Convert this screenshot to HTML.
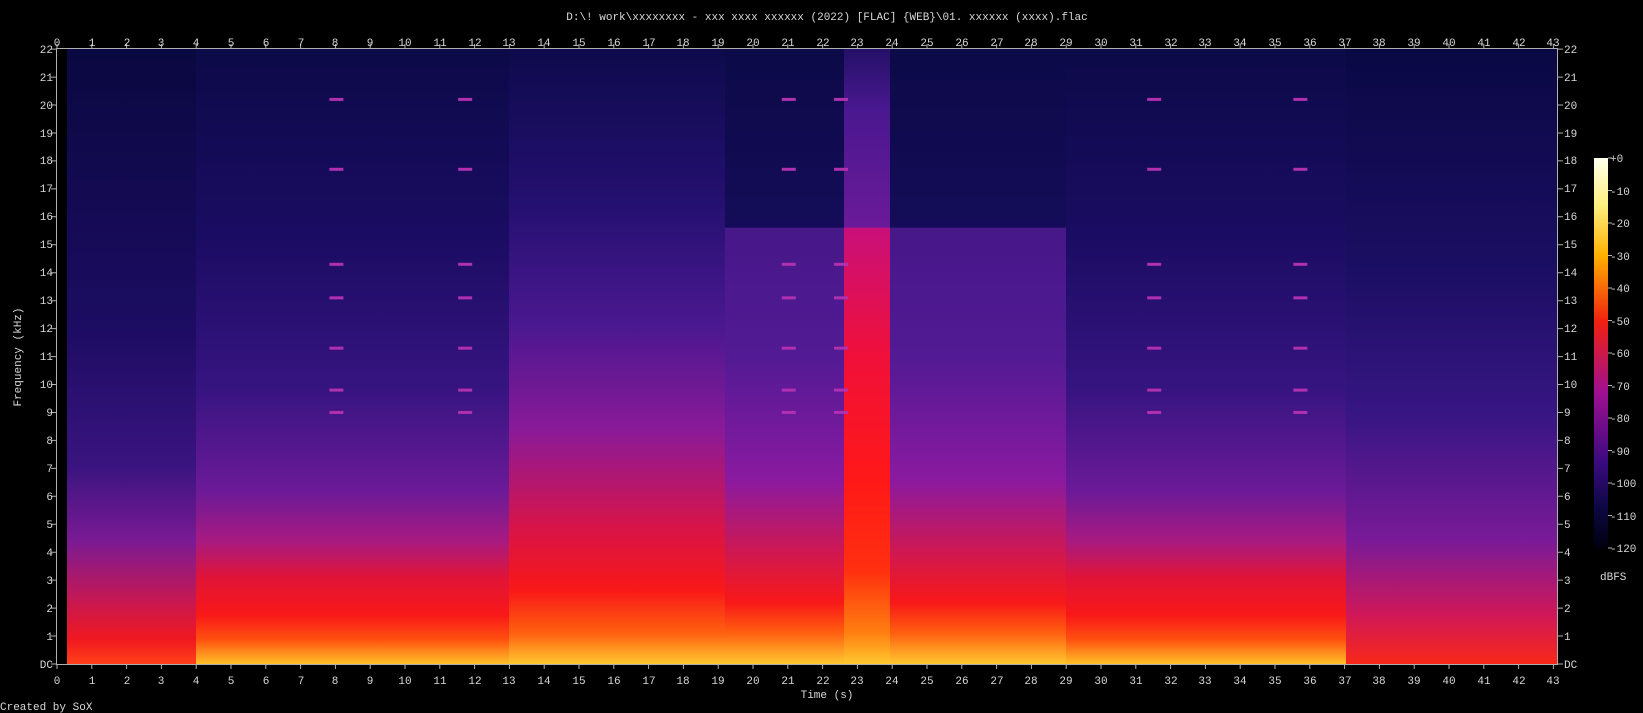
<!DOCTYPE html>
<html><head><meta charset="utf-8"><style>
html,body{margin:0;padding:0;background:#000;width:1643px;height:713px;overflow:hidden}
svg text{font-family:"Liberation Mono",monospace;font-size:11px;fill:#d8d8d8}
</style></head><body>
<svg id="s" width="1643" height="713" viewBox="0 0 1643 713" xmlns="http://www.w3.org/2000/svg">
<defs>
<linearGradient id="gB" x1="0" y1="0" x2="0" y2="1">
<stop offset="0" stop-color="#0a0840"/><stop offset="0.45" stop-color="#1c0c62"/><stop offset="0.68" stop-color="#3a1480"/><stop offset="0.8" stop-color="#7a1a94"/><stop offset="0.9" stop-color="#c81850"/><stop offset="0.96" stop-color="#f01820"/><stop offset="1" stop-color="#ff4018"/></linearGradient>
<linearGradient id="gC" x1="0" y1="0" x2="0" y2="1">
<stop offset="0" stop-color="#0c0a48"/><stop offset="0.3" stop-color="#1a0c62"/><stop offset="0.55" stop-color="#361480"/><stop offset="0.72" stop-color="#6c1a98"/><stop offset="0.8" stop-color="#a81a80"/><stop offset="0.86" stop-color="#e01438"/><stop offset="0.92" stop-color="#f81818"/><stop offset="0.96" stop-color="#ff5010"/><stop offset="1" stop-color="#ffc028"/></linearGradient>
<linearGradient id="gD" x1="0" y1="0" x2="0" y2="1">
<stop offset="0" stop-color="#0e0a4c"/><stop offset="0.25" stop-color="#241070"/><stop offset="0.45" stop-color="#4a1890"/><stop offset="0.62" stop-color="#8a1a98"/><stop offset="0.78" stop-color="#d81448"/><stop offset="0.88" stop-color="#f81818"/><stop offset="0.95" stop-color="#ff6010"/><stop offset="1" stop-color="#ffc830"/></linearGradient>
<linearGradient id="gE" x1="0" y1="0" x2="0" y2="1">
<stop offset="0" stop-color="#0c0a48"/><stop offset="0.29" stop-color="#140c58"/><stop offset="0.291" stop-color="#461888"/><stop offset="0.5" stop-color="#521a94"/><stop offset="0.7" stop-color="#8a1aa0"/><stop offset="0.82" stop-color="#d01850"/><stop offset="0.9" stop-color="#f81818"/><stop offset="0.95" stop-color="#ff6010"/><stop offset="1" stop-color="#ffc830"/></linearGradient>
<linearGradient id="gF" x1="0" y1="0" x2="0" y2="1">
<stop offset="0" stop-color="#241068"/><stop offset="0.1" stop-color="#4a1890"/><stop offset="0.29" stop-color="#6a1a98"/><stop offset="0.291" stop-color="#c8107a"/><stop offset="0.5" stop-color="#f0103a"/><stop offset="0.7" stop-color="#ff1818"/><stop offset="0.85" stop-color="#ff3010"/><stop offset="0.95" stop-color="#ff8010"/><stop offset="1" stop-color="#ffc830"/></linearGradient>
<linearGradient id="gI" x1="0" y1="0" x2="0" y2="1">
<stop offset="0" stop-color="#0a0844"/><stop offset="0.35" stop-color="#1a0e62"/><stop offset="0.6" stop-color="#381684"/><stop offset="0.8" stop-color="#7a1a98"/><stop offset="0.92" stop-color="#d01858"/><stop offset="1" stop-color="#f82818"/></linearGradient>
<linearGradient id="cb" x1="0" y1="0" x2="0" y2="1">
<stop offset="0" stop-color="#ffffee"/><stop offset="0.12" stop-color="#fff080"/><stop offset="0.25" stop-color="#ffb000"/><stop offset="0.42" stop-color="#f02010"/><stop offset="0.6" stop-color="#a01090"/><stop offset="0.78" stop-color="#3a0a80"/><stop offset="0.9" stop-color="#0c0840"/><stop offset="1" stop-color="#000010"/></linearGradient>
</defs>
<rect x="57" y="49" width="1500" height="615" fill="#000"/>
<rect x="67" y="49" width="129" height="615" fill="url(#gB)"/>
<rect x="196" y="49" width="313" height="615" fill="url(#gC)"/>
<rect x="509" y="49" width="216" height="615" fill="url(#gD)"/>
<rect x="725" y="49" width="119" height="615" fill="url(#gE)"/>
<rect x="844" y="49" width="46" height="615" fill="url(#gF)"/>
<rect x="890" y="49" width="176" height="615" fill="url(#gE)"/>
<rect x="1066" y="49" width="280" height="615" fill="url(#gC)"/>
<rect x="1346" y="49" width="211" height="615" fill="url(#gI)"/>
<g id="dash" fill="#b030b0"></g>
<g id="ticks" stroke="#b0b0b0" stroke-width="1" fill="none"></g>
<rect x="56.5" y="48.5" width="1501" height="616" fill="none" stroke="#b0b0b0"/>
<rect x="1594" y="158" width="14" height="390" fill="url(#cb)"/>
<text x="827" y="20" text-anchor="middle">D:\! work\xxxxxxxx - xxx xxxx xxxxxx (2022) [FLAC] {WEB}\01. xxxxxx (xxxx).flac</text>
<g text-anchor="middle">
<text x="57" y="46">0</text><text x="92" y="46">1</text><text x="127" y="46">2</text><text x="161" y="46">3</text><text x="196" y="46">4</text><text x="231" y="46">5</text><text x="266" y="46">6</text><text x="301" y="46">7</text><text x="335" y="46">8</text><text x="370" y="46">9</text><text x="405" y="46">10</text><text x="440" y="46">11</text><text x="475" y="46">12</text><text x="509" y="46">13</text><text x="544" y="46">14</text><text x="579" y="46">15</text><text x="614" y="46">16</text><text x="649" y="46">17</text><text x="683" y="46">18</text><text x="718" y="46">19</text><text x="753" y="46">20</text><text x="788" y="46">21</text><text x="823" y="46">22</text><text x="857" y="46">23</text><text x="892" y="46">24</text><text x="927" y="46">25</text><text x="962" y="46">26</text><text x="997" y="46">27</text><text x="1031" y="46">28</text><text x="1066" y="46">29</text><text x="1101" y="46">30</text><text x="1136" y="46">31</text><text x="1171" y="46">32</text><text x="1205" y="46">33</text><text x="1240" y="46">34</text><text x="1275" y="46">35</text><text x="1310" y="46">36</text><text x="1345" y="46">37</text><text x="1379" y="46">38</text><text x="1414" y="46">39</text><text x="1449" y="46">40</text><text x="1484" y="46">41</text><text x="1519" y="46">42</text><text x="1553" y="46">43</text>
</g>
<g text-anchor="middle">
<text x="57" y="684">0</text><text x="92" y="684">1</text><text x="127" y="684">2</text><text x="161" y="684">3</text><text x="196" y="684">4</text><text x="231" y="684">5</text><text x="266" y="684">6</text><text x="301" y="684">7</text><text x="335" y="684">8</text><text x="370" y="684">9</text><text x="405" y="684">10</text><text x="440" y="684">11</text><text x="475" y="684">12</text><text x="509" y="684">13</text><text x="544" y="684">14</text><text x="579" y="684">15</text><text x="614" y="684">16</text><text x="649" y="684">17</text><text x="683" y="684">18</text><text x="718" y="684">19</text><text x="753" y="684">20</text><text x="788" y="684">21</text><text x="823" y="684">22</text><text x="857" y="684">23</text><text x="892" y="684">24</text><text x="927" y="684">25</text><text x="962" y="684">26</text><text x="997" y="684">27</text><text x="1031" y="684">28</text><text x="1066" y="684">29</text><text x="1101" y="684">30</text><text x="1136" y="684">31</text><text x="1171" y="684">32</text><text x="1205" y="684">33</text><text x="1240" y="684">34</text><text x="1275" y="684">35</text><text x="1310" y="684">36</text><text x="1345" y="684">37</text><text x="1379" y="684">38</text><text x="1414" y="684">39</text><text x="1449" y="684">40</text><text x="1484" y="684">41</text><text x="1519" y="684">42</text><text x="1553" y="684">43</text>
</g>
<g text-anchor="end">
<text x="53" y="668">DC</text><text x="53" y="640">1</text><text x="53" y="612">2</text><text x="53" y="584">3</text><text x="53" y="556">4</text><text x="53" y="528">5</text><text x="53" y="500">6</text><text x="53" y="472">7</text><text x="53" y="444">8</text><text x="53" y="416">9</text><text x="53" y="388">10</text><text x="53" y="360">11</text><text x="53" y="332">12</text><text x="53" y="304">13</text><text x="53" y="276">14</text><text x="53" y="248">15</text><text x="53" y="220">16</text><text x="53" y="192">17</text><text x="53" y="164">18</text><text x="53" y="137">19</text><text x="53" y="109">20</text><text x="53" y="81">21</text><text x="53" y="53">22</text>
</g>
<g>
<text x="1564" y="668">DC</text><text x="1564" y="640">1</text><text x="1564" y="612">2</text><text x="1564" y="584">3</text><text x="1564" y="556">4</text><text x="1564" y="528">5</text><text x="1564" y="500">6</text><text x="1564" y="472">7</text><text x="1564" y="444">8</text><text x="1564" y="416">9</text><text x="1564" y="388">10</text><text x="1564" y="360">11</text><text x="1564" y="332">12</text><text x="1564" y="304">13</text><text x="1564" y="276">14</text><text x="1564" y="248">15</text><text x="1564" y="220">16</text><text x="1564" y="192">17</text><text x="1564" y="164">18</text><text x="1564" y="137">19</text><text x="1564" y="109">20</text><text x="1564" y="81">21</text><text x="1564" y="53">22</text>
</g>
<g>
<text x="1610" y="162">+0</text><text x="1610" y="195">-10</text><text x="1610" y="227">-20</text><text x="1610" y="260">-30</text><text x="1610" y="292">-40</text><text x="1610" y="325">-50</text><text x="1610" y="357">-60</text><text x="1610" y="390">-70</text><text x="1610" y="422">-80</text><text x="1610" y="455">-90</text><text x="1610" y="487">-100</text><text x="1610" y="520">-110</text><text x="1610" y="552">-120</text>
<text x="1600" y="580">dBFS</text>
</g>
<text x="827" y="698" text-anchor="middle">Time (s)</text>
<text transform="translate(21,357) rotate(-90)" text-anchor="middle">Frequency (kHz)</text>
<text x="0" y="710">Created by SoX</text>
</svg>
<script>
var ns="http://www.w3.org/2000/svg",t=document.getElementById('ticks'),d="";
for(var i=0;i<=43;i++){var x=(57+34.8*i).toFixed(1);d+="M"+x+" 44V49M"+x+" 664V669";}
for(var f=0;f<=22;f++){var y=(664-27.95*f).toFixed(1);d+="M51 "+y+"H57M1557 "+y+"H1563";}
for(var k=0;k<=12;k++){var y2=158+32.5*k;d+="M1608 "+y2+"H1612";}
var p=document.createElementNS(ns,'path');p.setAttribute('d',d);t.appendChild(p);
var g=document.getElementById('dash');
var cols=[8,11.7,21,22.5,31.5,35.7];var fr=[20.2,17.7,13.1,9.8,9.0,14.3,11.3];
cols.forEach(function(c){fr.forEach(function(f){var r=document.createElementNS(ns,'rect');r.setAttribute('x',57+34.8*c-6);r.setAttribute('y',664-27.95*f-1.5);r.setAttribute('width',14);r.setAttribute('height',3);g.appendChild(r);});});
</script>
</body></html>
